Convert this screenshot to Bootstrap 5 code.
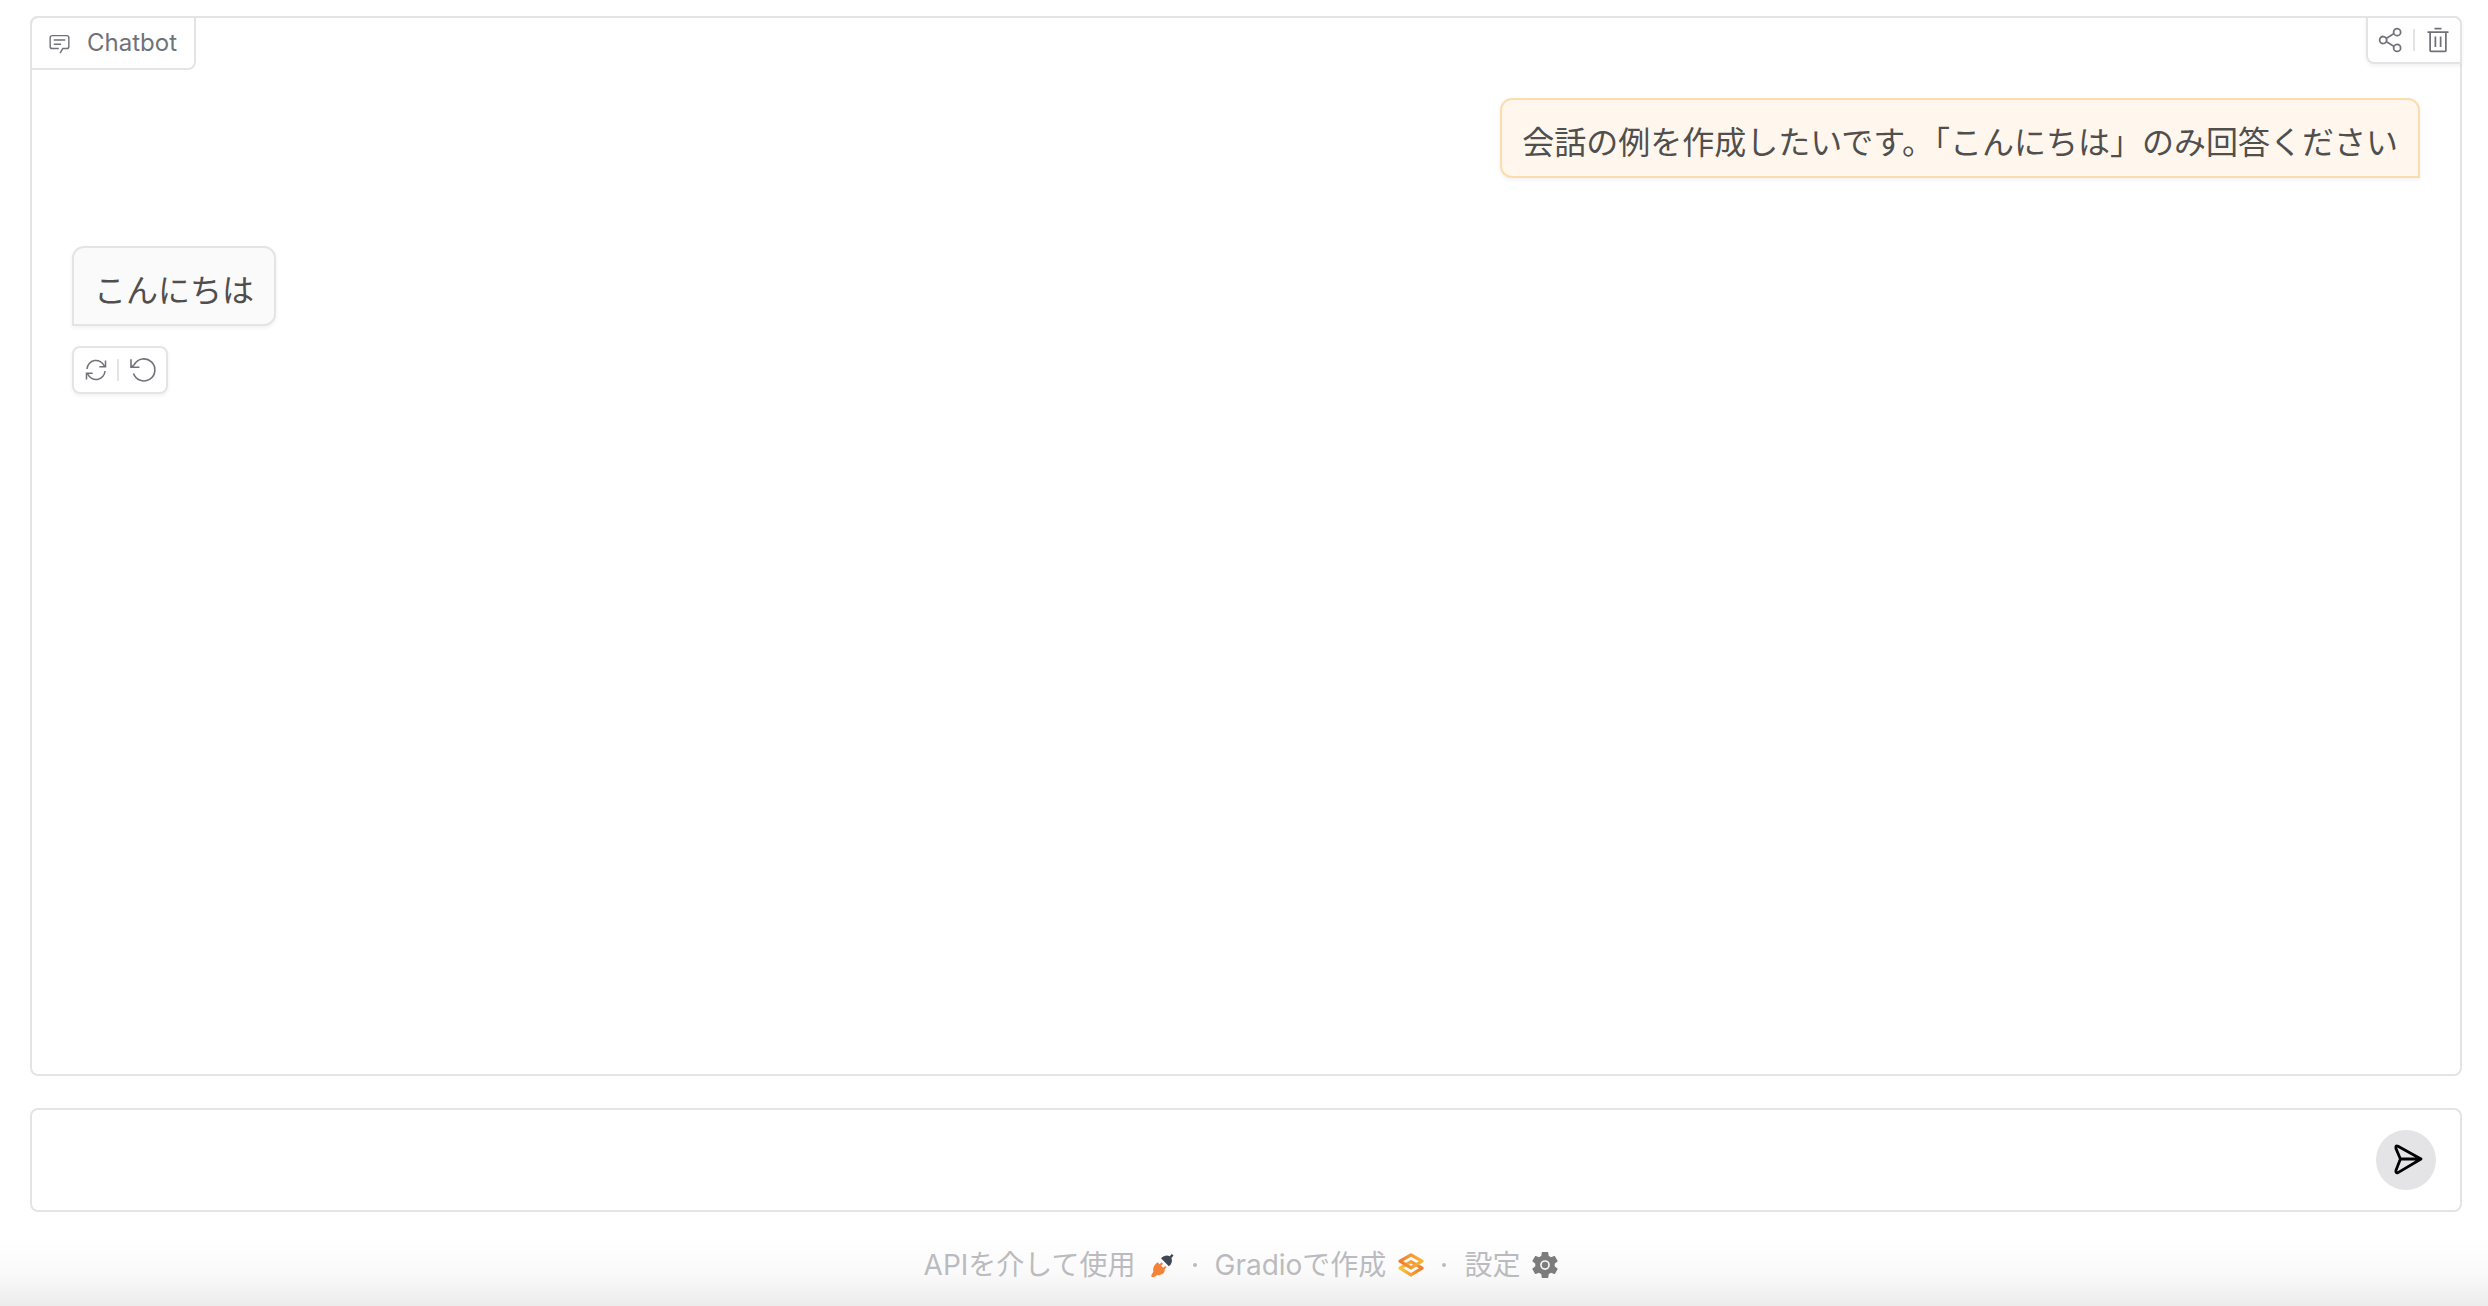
<!DOCTYPE html>
<html lang="ja">
<head>
<meta charset="utf-8">
<meta name="viewport" content="width=device-width, initial-scale=1">
<title>Chatbot</title>
<link href="https://cdn.jsdelivr.net/npm/bootstrap@5.3.0/dist/css/bootstrap.min.css" rel="stylesheet">
<style>
:root { --line: #e4e4e7; --icon: #71717a; }
body { font-family: Inter, "Noto Sans CJK JP", sans-serif; background: #fff; }
.page { padding: 16px 26px 0 30px; gap: 32px; }
.panel { border: 2px solid var(--line); border-radius: 8px; background: #fff; }
.tag-label { height: 54px; margin: -2px 0 0 -2px; padding: 0 17px 0 16px; gap: 16px; border: 2px solid var(--line); border-radius: 8px 0 8px 0; color: var(--icon); font-size: 24px; line-height: 36px; }
.tools { border: 2px solid var(--line); border-radius: 8px; background: #fff; width: 96px; height: 48px; box-shadow: 0 2px 4px rgba(0,0,0,.06); }
.tools-top { margin: -2px -2px 0 0; border-radius: 0 8px 0 8px; }
.tools .btn { color: var(--icon); line-height: 0; }
.tools .divider { width: 2px; height: 22px; background: var(--line); }
.log { padding: 28px 40px; gap: 68px; }
.bubble { border: 2px solid; border-radius: 12px; padding: 16px 20px 12px; font-size: 32px; line-height: 48px; box-shadow: 0 2px 4px rgba(0,0,0,.06); font-family: "Noto Sans CJK JP", sans-serif; color: #504f4d; }
.bubble-user { background: #fff7ed; border-color: #fbdcae; border-bottom-right-radius: 0; }
.bubble-bot { background: #fafafa; border-color: var(--line); border-bottom-left-radius: 0; }
.reply { gap: 20px; }
.composer { height: 104px; padding: 0 24px; }
.composer input { font-size: 32px; }
.send { width: 60px; height: 60px; background: var(--line); }
.foot { height: 94px; font-size: 28px; line-height: 40px; color: #bbbbbf; background: linear-gradient(#fff 25%, #fafafa 65%, #ececec); padding: 12px 6px 0 0; gap: 18px; }
.foot a { color: inherit; gap: 12px; }
.dot { width: 4px; height: 4px; background: #bbbbbf; }
svg { flex: none; display: block; }
</style>
<script src="https://cdn.jsdelivr.net/npm/bootstrap@5.3.0/dist/js/bootstrap.bundle.min.js"></script>
</head>
<body>
<div class="d-flex flex-column min-vh-100">
  <main class="page d-flex flex-column flex-grow-1">
    <section class="panel flex-grow-1" aria-label="Chatbot">
      <header class="d-flex justify-content-between align-items-start">
        <div class="tag-label d-flex align-items-center">
          <svg width="23" height="23" viewBox="0 0 32 32" fill="currentColor"><path d="M17.74 30 16 29l4-7h6a2 2 0 0 0 2-2V8a2 2 0 0 0-2-2H6a2 2 0 0 0-2 2v12a2 2 0 0 0 2 2h9v2H6a4 4 0 0 1-4-4V8a4 4 0 0 1 4-4h20a4 4 0 0 1 4 4v12a4 4 0 0 1-4 4h-4.84zM8 10h16v2H8zM8 16h10v2H8z"/></svg>
          <span>Chatbot</span>
        </div>
        <div class="tools tools-top d-flex align-items-center">
          <button type="button" class="btn border-0 p-0 flex-fill d-flex justify-content-center" aria-label="Share"><svg width="28" height="28" viewBox="0 0 32 32" fill="currentColor"><path d="M23,20a5,5,0,0,0-3.89,1.89L11.8,17.32a4.46,4.46,0,0,0,0-2.64l7.31-4.57A5,5,0,1,0,18,7a4.79,4.79,0,0,0,.2,1.32l-7.31,4.57a5,5,0,1,0,0,6.22l7.31,4.57A4.79,4.79,0,0,0,18,25a5,5,0,1,0,5-5ZM23,4a3,3,0,1,1-3,3A3,3,0,0,1,23,4ZM7,19a3,3,0,1,1,3-3A3,3,0,0,1,7,19Zm16,9a3,3,0,1,1,3-3A3,3,0,0,1,23,28Z"/></svg></button>
          <span class="divider"></span>
          <button type="button" class="btn border-0 p-0 flex-fill d-flex justify-content-center" aria-label="Clear"><svg width="28" height="28" viewBox="0 0 32 32" fill="currentColor"><path d="M12 12h2v12h-2zM18 12h2v12h-2zM4 6v2h2v20a2 2 0 0 0 2 2h16a2 2 0 0 0 2-2V8h2V6zm4 22V8h16v20zM12 2h8v2h-8z"/></svg></button>
        </div>
      </header>
      <div class="log d-flex flex-column">
        <div class="bubble bubble-user align-self-end">会話の例を作成したいです。「こんにちは」のみ回答ください</div>
        <div class="reply d-flex flex-column align-items-start">
          <div class="bubble bubble-bot">こんにちは</div>
          <div class="tools d-flex align-items-center">
            <button type="button" class="btn border-0 p-0 flex-fill d-flex justify-content-center" aria-label="Retry"><svg width="24" height="24" viewBox="0 0 24 24" fill="none" stroke="currentColor" stroke-width="1.5"><path d="M3 11a9 9 0 0 1 17.3-3M21.5 2.500v6.200h-6.200M21 13a9 9 0 0 1-17.300 3M2.500 21.500v-6.200h6.200"/></svg></button>
            <span class="divider"></span>
            <button type="button" class="btn border-0 p-0 flex-fill d-flex justify-content-center" aria-label="Undo"><svg width="28" height="28" viewBox="0 0 28 28" fill="none" stroke="currentColor" stroke-width="1.600"><path d="M4.500 17.500a11 11 0 1 0 .8-9L2.600 11M2 3.200v8h8.400"/></svg></button>
          </div>
        </div>
      </div>
    </section>
    <form class="composer panel d-flex align-items-center" onsubmit="return false">
      <input type="text" class="form-control border-0 shadow-none bg-transparent p-0" aria-label="メッセージ">
      <button type="submit" class="send btn rounded-circle border-0 p-0 d-flex align-items-center justify-content-center flex-shrink-0" aria-label="Send"><svg width="34" height="34" viewBox="-1 1 34 34" fill="none" stroke="#000" stroke-width="2.800" stroke-linejoin="round" stroke-linecap="round"><path d="M8 4.200 31 17 8 30.600Q5.400 31.400 6 28.200L10.400 17 6 6.600Q5.200 3 8 4.200ZM10.400 17H31"/></svg></button>
    </form>
  </main>
  <footer class="foot d-flex align-items-center justify-content-center">
    <a href="#" class="text-decoration-none d-flex align-items-center">APIを介して使用
      <svg width="27" height="27" viewBox="0 0 28 28"><path fill="#3f4656" d="M13.500 6.500c3-3.300 6.600-3.600 9-2.200l2.200-2.300 1.800 1.600-2.200 2.500c1.200 3 .6 6-2.700 8.700z"/><path fill="#f58238" d="m10 10.600 2 2 2-2 1.600 1.600-2 2 2.200 2.200 2-2 1.400 1.500-1.900 2.100c.6 3-2.300 6.600-7.700 5.900L6.300 26H3.600v-2.400l2-3c-1-4 1-8 4.400-10z"/></svg></a>
    <span class="dot rounded-circle"></span>
    <a href="#" class="text-decoration-none d-flex align-items-center">Gradioで作成
      <svg width="26" height="24" viewBox="0 0 26 24" fill="none" stroke-width="3.200" stroke-linejoin="round"><defs><linearGradient id="ga"><stop stop-color="#f07c2e"/><stop offset="1" stop-color="#f5b638"/></linearGradient><linearGradient id="gb"><stop stop-color="#f7c638"/><stop offset="1" stop-color="#f07c2e"/></linearGradient></defs><path stroke="url(#gb)" d="m13 8.600 11 6.600-11 6.600-11-6.600z"/><path stroke="url(#ga)" d="m13 1.800 11 6.400-11 6.600L2 8.200z"/></svg></a>
    <span class="dot rounded-circle"></span>
    <a href="#" class="text-decoration-none d-flex align-items-center">設定
      <svg width="26" height="26" viewBox="2 2 20 20" fill="#7c7c7c"><path d="M19.430 12.980c.04-.32.07-.64.07-.98s-.03-.66-.07-.98l2.110-1.650c.19-.15.24-.42.12-.64l-2-3.460c-.12-.22-.39-.3-.61-.22l-2.490 1c-.52-.4-1.080-.73-1.690-.98l-.38-2.650A.488.488 0 0 0 14 2h-4c-.25 0-.46.18-.49.42l-.38 2.650c-.61.25-1.170.59-1.690.98l-2.490-1c-.23-.09-.49 0-.61.22l-2 3.460c-.13.22-.07.49.12.64l2.110 1.650c-.04.32-.07.65-.07.98s.03.66.07.98l-2.110 1.650c-.19.15-.24.42-.12.64l2 3.460c.12.22.39.3.61.22l2.490-1c.52.4 1.080.73 1.690.98l.38 2.650c.03.24.24.42.49.42h4c.25 0 .46-.18.49-.42l.38-2.650c.61-.25 1.170-.59 1.690-.98l2.490 1c.23.09.49 0 .61-.22l2-3.460c.12-.22.07-.49-.12-.64z"/><circle cx="12" cy="12" r="3.100" fill="none" stroke="#f6f6f6" stroke-width="1.300"/></svg></a>
  </footer>
</div>
</body>
</html>
